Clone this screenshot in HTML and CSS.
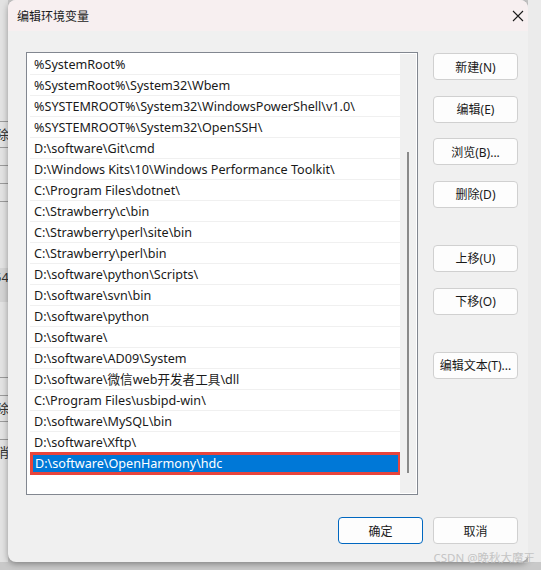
FILE: index.html
```html
<!DOCTYPE html>
<html lang="zh-CN">
<head>
    <meta charset="UTF-8">
    <title>编辑环境变量</title>
    <link rel="stylesheet" href="styles.css">
</head>
<body>
    <div class="desktop">
        <div class="behind">
            <div class="behind-row">除</div>
            <div class="behind-row thin">&nbsp;</div>
            <div class="behind-row thin">&nbsp;</div>
            <div class="behind-row thin">&nbsp;</div>
            <div class="behind-row tall">54</div>
            <div class="behind-row thin">&nbsp;</div>
            <div class="behind-row">除</div>
            <div class="behind-row thin">&nbsp;</div>
            <div class="behind-row">消</div>
        </div>

        <div class="dialog">
            <div class="title-bar">
                <span class="title">编辑环境变量</span>
                <span class="close">
                    <svg width="12" height="12" viewBox="0 0 12 12">
                        <path d="M1 1 L11 11 M11 1 L1 11" stroke="#1b1b1b" stroke-width="1.1" fill="none"/>
                    </svg>
                </span>
            </div>

            <div class="dialog-body">
                <div class="main">
                    <div class="path-list">
                        <div class="rows" id="rows"></div>
                        <div class="scrollbar"><div class="thumb"></div></div>
                    </div>

                    <div class="side-buttons">
                        <button class="btn">新建(N)</button>
                        <button class="btn">编辑(E)</button>
                        <button class="btn">浏览(B)...</button>
                        <button class="btn">删除(D)</button>
                        <button class="btn gap-big">上移(U)</button>
                        <button class="btn">下移(O)</button>
                        <button class="btn gap-big">编辑文本(T)...</button>
                    </div>
                </div>

                <div class="footer">
                    <button class="btn default">确定</button>
                    <button class="btn">取消</button>
                </div>
            </div>
        </div>

        <div class="behind-right"></div>
        <div class="watermark">CSDN @晚秋大魔王</div>
    </div>

    <script>
        const paths = [
            '%SystemRoot%',
            '%SystemRoot%\\System32\\Wbem',
            '%SYSTEMROOT%\\System32\\WindowsPowerShell\\v1.0\\',
            '%SYSTEMROOT%\\System32\\OpenSSH\\',
            'D:\\software\\Git\\cmd',
            'D:\\Windows Kits\\10\\Windows Performance Toolkit\\',
            'C:\\Program Files\\dotnet\\',
            'C:\\Strawberry\\c\\bin',
            'C:\\Strawberry\\perl\\site\\bin',
            'C:\\Strawberry\\perl\\bin',
            'D:\\software\\python\\Scripts\\',
            'D:\\software\\svn\\bin',
            'D:\\software\\python',
            'D:\\software\\',
            'D:\\software\\AD09\\System',
            'D:\\software\\微信web开发者工具\\dll',
            'C:\\Program Files\\usbipd-win\\',
            'D:\\software\\MySQL\\bin',
            'D:\\software\\Xftp\\',
            'D:\\software\\OpenHarmony\\hdc'
        ];

        const rows = document.getElementById('rows');
        paths.forEach(function(p, i) {
            const row = document.createElement('div');
            row.className = 'row' + (i === paths.length - 1 ? ' selected' : '');
            row.textContent = p;
            rows.appendChild(row);
        });
    </script>
</body>
</html>
```

FILE: styles.css
```css
html, body {
    margin: 0;
    padding: 0;
}
body {
    font-family: "Noto Sans", "Noto Sans CJK SC", sans-serif;
    font-size: 12px;
    color: #1a1a1a;
    background: #c8c8c8;
}
.desktop {
    position: relative;
    width: 541px;
    height: 570px;
    display: flex;
    overflow: hidden;
    background: #c9c9c9;
}

/* window behind the dialog */
.behind {
    width: 8px;
    height: 562px;
    background: #e2e2e2;
    display: flex;
    flex-direction: column;
    padding-top: 121px;
    box-sizing: border-box;
    overflow: hidden;
}
.behind-row {
    height: 25px;
    line-height: 25px;
    border-top: 1px solid #9a9a9a;
    font-size: 13px;
    color: #333;
    text-indent: -4px;
    white-space: nowrap;
}
.behind-row.thin {
    height: 17px;
}
.behind-row.tall {
    height: 175px;
    line-height: 150px;
    background: linear-gradient(#e2e2e2 66px, #d4d4d4 66px, #d4d4d4 100px, #e2e2e2 100px);
    text-indent: -6px;
}
.behind-right {
    flex: 1;
    height: 562px;
    background: #ebebeb;
}

.dialog {
    width: 520px;
    height: 562px;
    background: #f0f0f0;
    border-radius: 8px;
    overflow: hidden;
    box-shadow: 0 2px 6px rgba(0,0,0,0.35);
    display: flex;
    flex-direction: column;
}
.title-bar {
    height: 31px;
    background: #f7eff0;
    display: flex;
    align-items: center;
    justify-content: space-between;
    padding: 0 4px 0 9px;
}
.title {
    font-size: 12px;
    color: #1a1a1a;
}
.close {
    display: flex;
}

.dialog-body {
    flex: 1;
    padding: 21px 10px 0 18px;
    display: flex;
    flex-direction: column;
}
.main {
    display: flex;
    gap: 15px;
}
.path-list {
    width: 390px;
    height: 439px;
    border: 1px solid #828790;
    background: #fff;
    display: flex;
    padding: 1px 1px 1px 3px;
    box-sizing: content-box;
}
.rows {
    flex: 1;
    display: flex;
    flex-direction: column;
}
.row {
    height: 20px;
    line-height: 21px;
    padding-left: 4px;
    font-size: 12.6px;
    border-bottom: 1px solid #f0f0f0;
    white-space: nowrap;
}
.row.selected {
    background: #0078d7;
    color: #fff;
    outline: 3px solid #e8453c;
    outline-offset: -2px;
    border-bottom-color: #0078d7;
    margin-left: 1px;
}
.scrollbar {
    width: 16px;
    background: #f0f0f0;
    display: flex;
    justify-content: center;
    padding-top: 98px;
    padding-bottom: 20px;
}
.thumb {
    width: 2px;
    background: #8a8a8a;
    flex: 0 0 auto;
    height: 321px;
}

.side-buttons {
    display: flex;
    flex-direction: column;
    gap: 15.67px;
    padding-top: 1px;
}
.btn {
    width: 85px;
    height: 27px;
    font-family: inherit;
    font-size: 12px;
    color: #1a1a1a;
    background: #fdfdfd;
    border: 1px solid #d0d0d0;
    border-radius: 4px;
    padding: 0;
}
.btn.gap-big {
    margin-top: 21.3px;
}
.btn.default {
    border-color: #0067c0;
}
.footer {
    display: flex;
    justify-content: flex-end;
    gap: 10px;
    margin-top: 22px;
}

.watermark {
    position: absolute;
    right: 6px;
    bottom: 5px;
    font-size: 11.5px;
    color: #c4c4c4;
}
```
